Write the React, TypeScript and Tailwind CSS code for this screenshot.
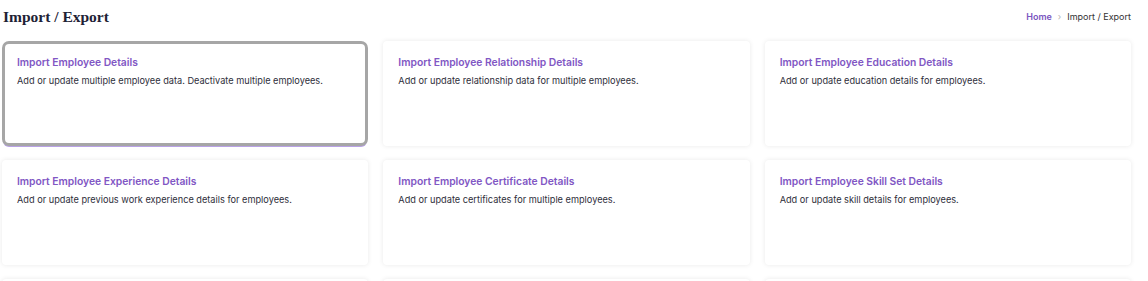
import React from 'react';

type Item = { title: string; desc: string };

const items: Item[] = [
  { title: 'Import Employee Details', desc: 'Add or update multiple employee data. Deactivate multiple employees.' },
  { title: 'Import Employee Relationship Details', desc: 'Add or update relationship data for multiple employees.' },
  { title: 'Import Employee Education Details', desc: 'Add or update education details for employees.' },
  { title: 'Import Employee Experience Details', desc: 'Add or update previous work experience details for employees.' },
  { title: 'Import Employee Certificate Details', desc: 'Add or update certificates for multiple employees.' },
  { title: 'Import Employee Skill Set Details', desc: 'Add or update skill details for employees.' },
];

const Card: React.FC<{ item?: Item; active?: boolean }> = ({ item, active }) => (
  <div
    className={
      active
        ? 'h-[105px] rounded-[7px] border-[3px] border-[#a6a6a6] bg-white px-[12px] pt-[12px] shadow-[0_2px_0_-1px_#b9a2e6]'
        : 'h-[105px] rounded-[4px] bg-white px-[15px] pt-[15px] shadow-[0_0_5px_rgba(0,0,0,0.09)]'
    }
  >
    {item && (
      <>
        <div className="text-[10.3px] font-semibold leading-[13px] text-[#8157c4]">{item.title}</div>
        <div className="mt-[6px] text-[9.2px] leading-[12px] text-[#2e2e3a]">{item.desc}</div>
      </>
    )}
  </div>
);

export default function App() {
  return (
    <div className="h-[281px] overflow-hidden bg-white font-['Inter',sans-serif]">
      <div className="mr-[17px] flex items-center justify-between pl-[3px] pt-[7px]">
        <h1 className="font-['Liberation_Serif',serif] text-[15.5px] font-bold leading-[20px] text-[#1e2235]">Import / Export</h1>
        <div className="flex items-center gap-[6px] text-[9px]">
          <span className="font-semibold text-[#7a55c0]">Home</span>
          <span className="text-[#b5b5b5]">›</span>
          <span className="text-[#333]">Import / Export</span>
        </div>
      </div>
      <div className="ml-[2px] mr-[17px] mt-[14px] grid grid-cols-3 gap-x-[15px] gap-y-[14px]">
        {items.map((it, i) => (
          <Card key={it.title} item={it} active={i === 0} />
        ))}
        <Card />
        <Card />
        <Card />
      </div>
    </div>
  );
}
